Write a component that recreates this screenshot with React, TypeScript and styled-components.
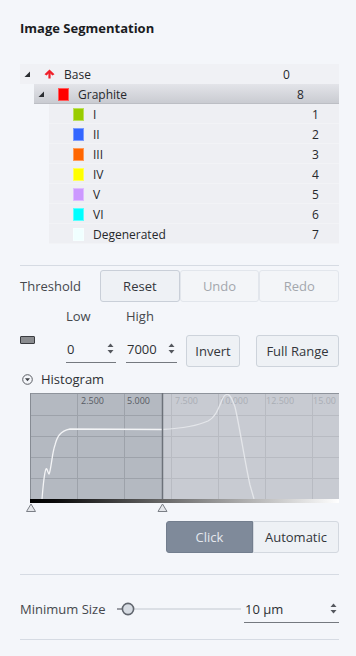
import styled, { createGlobalStyle } from 'styled-components'

const GlobalStyle = createGlobalStyle`
  body {
    margin: 0;
    background: #f4f6fa;
    font-family: "Open Sans", "Noto Sans", sans-serif;
    color: #2a2c30;
  }
`

type Node = {
  label: string
  value: number
  level: number
  color?: string
  expanded?: boolean
  selected?: boolean
  base?: boolean
}

const NODES: Node[] = [
  { label: 'Base', value: 0, level: 0, expanded: true, base: true },
  { label: 'Graphite', value: 8, level: 1, expanded: true, selected: true, color: '#ff0000' },
  { label: 'I', value: 1, level: 2, color: '#99cc00' },
  { label: 'II', value: 2, level: 2, color: '#3366ff' },
  { label: 'III', value: 3, level: 2, color: '#ff6600' },
  { label: 'IV', value: 4, level: 2, color: '#ffff00' },
  { label: 'V', value: 5, level: 2, color: '#cc99ff' },
  { label: 'VI', value: 6, level: 2, color: '#00ffff' },
  { label: 'Degenerated', value: 7, level: 2, color: '#f0ffff' }
]

const INDENT = [0, 14, 29]

const Panel = styled.div`
  width: 356px;
  height: 656px;
  box-sizing: border-box;
  padding: 20px 17px 0 20px;
  overflow: hidden;
`

const Title = styled.h1`
  margin: 0;
  font-size: 13px;
  font-weight: 700;
  line-height: 16px;
  color: #1b1c1f;
`

const Tree = styled.div`
  margin-top: 28px;
  display: flex;
  flex-direction: column;
`

const TreeRow = styled.div<{ $level: number; $selected?: boolean }>`
  display: grid;
  grid-template-columns: 259px 1fr;
  align-items: center;
  height: 20px;
  box-sizing: border-box;
  margin-left: ${p => INDENT[p.$level]}px;
  padding-left: 4px;
  font-size: 12px;
  color: #26282c;
  background: ${p =>
    p.$selected
      ? 'linear-gradient(#e3e4e9, #c8cad0)'
      : p.$level === 2
      ? '#eeeff3'
      : '#f0f1f5'};
  box-shadow: ${p =>
    p.$selected ? 'inset 0 -1px #bcbec4' : p.$level === 2 ? 'inset 0 -1px #f2f3f6' : 'none'};
`

const Lead = styled.div`
  display: flex;
  align-items: center;
`

const Expander = styled.span`
  width: 20px;
  display: flex;
  align-items: center;
`

const IconSlot = styled.span`
  width: 20px;
  display: flex;
  align-items: center;
`

const Swatch = styled.span<{ $color: string }>`
  width: 11px;
  height: 13px;
  box-sizing: border-box;
  background: ${p => p.$color};
  border: 1px solid rgba(255, 255, 255, 0.35);
`

const Divider = styled.div<{ $gap: number }>`
  margin-top: ${p => p.$gap}px;
  height: 1px;
  background: #d6dbe3;
`

const ThresholdRow = styled.div`
  display: flex;
  align-items: center;
  margin-top: 4px;
`

const RowLabel = styled.span<{ $width: number }>`
  width: ${p => p.$width}px;
  flex: none;
  font-size: 13px;
  color: #45484d;
`

const ButtonGroup = styled.div`
  display: flex;
  flex: 1;
`

const ToolButton = styled.button<{ $muted?: boolean }>`
  flex: 1;
  height: 32px;
  border-radius: 3px;
  font-family: inherit;
  font-size: 13px;
  background: ${p => (p.$muted ? '#f3f5f8' : '#eef1f5')};
  border: 1px solid ${p => (p.$muted ? '#e2e6ec' : '#c9cfd8')};
  color: ${p => (p.$muted ? '#a3a7ad' : '#33363b')};
  padding: 0;
`

const RangeGrid = styled.div<{ $gap: number }>`
  display: grid;
  grid-template-columns: 46px 60px 60px 70px 83px;
  margin-top: ${p => p.$gap}px;
`

const SmallLabel = styled.span`
  font-size: 13px;
  line-height: 18px;
  color: #45484d;
`

const ColorChip = styled.span`
  align-self: start;
  margin-top: 1px;
  width: 15px;
  height: 8px;
  box-sizing: border-box;
  background: #8a8c8f;
  border: 1px solid #3a3c40;
  border-radius: 1px;
`

const SpinField = styled.div<{ $width: number }>`
  width: ${p => p.$width}px;
  height: 28px;
  box-sizing: border-box;
  display: flex;
  align-items: center;
  justify-content: space-between;
  padding: 0 2px 0 1px;
  border-bottom: 1px solid #75797f;
  font-size: 13px;
  color: #2e3034;
`

const PlainButton = styled.button<{ $width: number }>`
  width: ${p => p.$width}px;
  height: 32px;
  border-radius: 3px;
  font-family: inherit;
  font-size: 13px;
  background: #eef1f5;
  border: 1px solid #cdd3db;
  color: #33363b;
  padding: 0;
`

const SectionHeader = styled.div`
  display: flex;
  align-items: center;
  gap: 8px;
  margin-top: 4px;
  padding-left: 2px;
  height: 16px;
  font-size: 13px;
  color: #2e3034;
`

const Chart = styled.svg`
  display: block;
  margin-top: 6px;
`

const Segmented = styled.div`
  display: flex;
  justify-content: flex-end;
  margin-top: 8px;
`

const SegButton = styled.button<{ $active?: boolean; $width: number }>`
  width: ${p => p.$width}px;
  height: 32px;
  font-family: inherit;
  font-size: 13px;
  padding: 0;
  border: 1px solid ${p => (p.$active ? '#737e8e' : '#d3d8df')};
  background: ${p => (p.$active ? '#7f8a9a' : '#eef1f5')};
  color: ${p => (p.$active ? '#e4e8ee' : '#33363b')};
  border-radius: ${p => (p.$active ? '3px 0 0 3px' : '0 3px 3px 0')};
`

const SizeRow = styled.div`
  display: flex;
  align-items: center;
  margin-top: 20px;
  height: 28px;
`

const SizeField = styled(SpinField)`
  margin-left: 3px;
`

const TreeTriangle = () => (
  <svg width="7" height="7" viewBox="0 0 7 7">
    <polygon points="6,0.5 6,6 0.5,6" fill="#2b2d31" />
  </svg>
)

const BaseArrow = () => (
  <svg width="11" height="10" viewBox="0 0 11 10">
    <path d="M0.5 5.2 L5.5 0.6 L10.5 5.2 L8.4 6.4 L5.5 3.7 L2.6 6.4 Z" fill="#f0202a" />
    <rect x="4.4" y="3" width="2.2" height="6.5" fill="#f0202a" />
  </svg>
)

const Spinner = () => (
  <svg width="7" height="11" viewBox="0 0 7 11">
    <polygon points="3.5,0.5 6.5,4 0.5,4" fill="#55585e" />
    <polygon points="3.5,10.5 6.5,7 0.5,7" fill="#55585e" />
  </svg>
)

const CollapseIcon = () => (
  <svg width="11" height="11" viewBox="0 0 11 11">
    <circle cx="5.5" cy="5.5" r="4.8" fill="none" stroke="#5a5d63" strokeWidth="1" />
    <polygon points="3,4.3 8,4.3 5.5,7.3" fill="#3d4045" />
  </svg>
)

const CURVE =
  'M22,106 C23,95 24,80 26,76 C27,74 28,81 29,81 C31,78 32,60 35,52 C37,44 40,38 50,36 ' +
  'L142,36.5 C160,35.5 175,34 188,28 C196,24 199,14 202,7 C204,2 206,1 208,1.5 ' +
  'C211,2 213,8 215,14 C219,30 225,70 230,92 L234,106'

const AXIS = [
  { x: 61, label: '2.500' },
  { x: 107, label: '5.000' },
  { x: 155, label: '7.500' },
  { x: 200, label: '10.000' },
  { x: 246, label: '12.500' },
  { x: 293, label: '15.00' }
]

const Histogram = () => {
  const split = 142
  return (
    <Chart width="319" height="120" viewBox="0 0 319 120">
      <defs>
        <linearGradient id="ramp" x1="0" x2="1" y1="0" y2="0">
          <stop offset="0" stopColor="#000" />
          <stop offset="0.08" stopColor="#0a0a0a" />
          <stop offset="1" stopColor="#fff" />
        </linearGradient>
        <clipPath id="plot">
          <rect x="10" y="0" width="309" height="106" />
        </clipPath>
        <clipPath id="inside">
          <rect x="10" y="0" width={split - 10} height="106" />
        </clipPath>
        <clipPath id="outside">
          <rect x={split} y="0" width={319 - split} height="106" />
        </clipPath>
      </defs>
      <rect x="10" y="0" width={split - 10} height="106" fill="#b4b9c1" />
      <rect x={split} y="0" width={319 - split} height="106" fill="#c8cbd2" />
      <g clipPath="url(#inside)" stroke="#9da2aa" strokeWidth="1">
        {[57.5, 104.5].map(x => (
          <line key={x} x1={x} x2={x} y1="0" y2="106" />
        ))}
        {[22.5, 43.5, 64.5, 85.5].map(y => (
          <line key={y} x1="10" x2="319" y1={y} y2={y} />
        ))}
      </g>
      <g clipPath="url(#outside)" stroke="#b8bbc2" strokeWidth="1">
        {[151.5, 198.5, 245.5, 292.5].map(x => (
          <line key={x} x1={x} x2={x} y1="0" y2="106" />
        ))}
        {[22.5, 43.5, 64.5, 85.5].map(y => (
          <line key={y} x1="10" x2="319" y1={y} y2={y} />
        ))}
      </g>
      <g clipPath="url(#plot)" fontFamily="Open Sans, sans-serif" fontSize="9">
        {AXIS.map(a => (
          <text key={a.label} x={a.x} y="11" fill={a.x < split ? '#575b63' : '#aaaeb5'}>
            {a.label}
          </text>
        ))}
      </g>
      <path d={CURVE} clipPath="url(#inside)" fill="none" stroke="#f3f4f6" strokeWidth="1.3" />
      <path d={CURVE} clipPath="url(#outside)" fill="none" stroke="#e4e6ea" strokeWidth="1.3" />
      <line x1="10" x2="319" y1="0.5" y2="0.5" stroke="#8e939b" />
      <line x1="10.5" x2="10.5" y1="0" y2="106" stroke="#868b93" />
      <line x1={split + 0.5} x2={split + 0.5} y1="0" y2="106" stroke="#6c7179" strokeWidth="1.5" />
      <rect x="10" y="106" width="309" height="4" fill="url(#ramp)" />
      {[11, split + 0.5].map(cx => (
        <polygon
          key={cx}
          points={`${cx},111 ${cx + 4.5},118.5 ${cx - 4.5},118.5`}
          fill="#e4e6ea"
          stroke="#7b7f86"
          strokeWidth="1"
          strokeLinejoin="round"
        />
      ))}
    </Chart>
  )
}

const SizeSlider = () => (
  <svg width="124" height="16" viewBox="0 0 124 16">
    <line x1="0" x2="6" y1="8" y2="8" stroke="#5d6169" strokeWidth="1.2" />
    <line x1="17" x2="124" y1="8" y2="8" stroke="#c2c8d0" strokeWidth="1" />
    <circle cx="11" cy="8" r="5.6" fill="#d7dce3" stroke="#61666e" strokeWidth="1.6" />
  </svg>
)

const App = () => (
  <Panel>
    <GlobalStyle />
    <Title>Image Segmentation</Title>

    <Tree>
      {NODES.map(n => (
        <TreeRow key={n.label} $level={n.level} $selected={n.selected}>
          <Lead>
            <Expander>{n.expanded && <TreeTriangle />}</Expander>
            <IconSlot>
              {n.base ? <BaseArrow /> : n.color && <Swatch $color={n.color} />}
            </IconSlot>
            <span>{n.label}</span>
          </Lead>
          <span>{n.value}</span>
        </TreeRow>
      ))}
    </Tree>

    <Divider $gap={21} />

    <ThresholdRow>
      <RowLabel $width={80}>Threshold</RowLabel>
      <ButtonGroup>
        <ToolButton>Reset</ToolButton>
        <ToolButton $muted>Undo</ToolButton>
        <ToolButton $muted>Redo</ToolButton>
      </ButtonGroup>
    </ThresholdRow>

    <RangeGrid $gap={5}>
      <span />
      <SmallLabel>Low</SmallLabel>
      <SmallLabel>High</SmallLabel>
    </RangeGrid>

    <RangeGrid $gap={10}>
      <ColorChip />
      <SpinField $width={50}>
        <span>0</span>
        <Spinner />
      </SpinField>
      <SpinField $width={51}>
        <span>7000</span>
        <Spinner />
      </SpinField>
      <PlainButton $width={54}>Invert</PlainButton>
      <PlainButton $width={83}>Full Range</PlainButton>
    </RangeGrid>

    <SectionHeader>
      <CollapseIcon />
      <span>Histogram</span>
    </SectionHeader>

    <Histogram />

    <Segmented>
      <SegButton $active $width={87}>Click</SegButton>
      <SegButton $width={86}>Automatic</SegButton>
    </Segmented>

    <Divider $gap={21} />

    <SizeRow>
      <RowLabel $width={97}>Minimum Size</RowLabel>
      <SizeSlider />
      <SizeField $width={95}>
        <span>10 µm</span>
        <Spinner />
      </SizeField>
    </SizeRow>

    <Divider $gap={16} />
  </Panel>
)

export default App
